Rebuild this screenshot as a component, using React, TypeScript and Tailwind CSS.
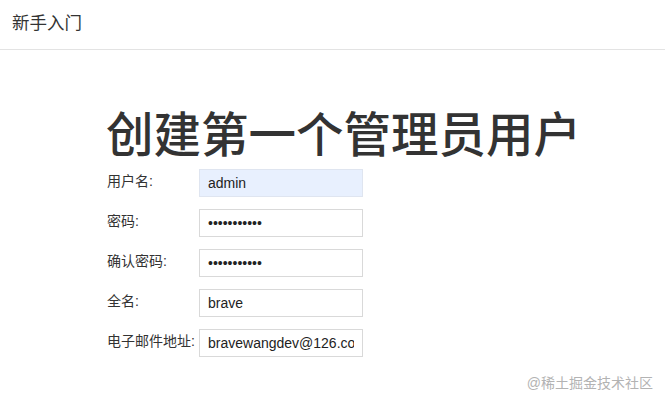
import React from "react";

const cjk = { fontFamily: '"Liberation Sans", "Noto Sans CJK SC", sans-serif' };

const rows: { label: string; value: string; type: string; autofill?: boolean }[] = [
  { label: "用户名:", value: "admin", type: "text", autofill: true },
  { label: "密码:", value: "12345678901", type: "password" },
  { label: "确认密码:", value: "12345678901", type: "password" },
  { label: "全名:", value: "brave", type: "text" },
  { label: "电子邮件地址:", value: "bravewangdev@126.com", type: "text" },
];

export default function App() {
  return (
    <div className="relative w-[665px] h-[404px] bg-white overflow-hidden text-[#333]" style={cjk}>
      <header className="h-[50px] border-b border-[#e3e3e3] flex items-center px-[12px]">
        <span className="text-[17.5px] leading-none -mt-[2px]">新手入门</span>
      </header>
      <main className="pl-[106px]">
        <h1 className="mt-[62px] text-[47.5px] leading-none font-medium text-[#333]">
          创建第一个管理员用户
        </h1>
        <div className="mt-[9px] grid grid-cols-[93px_164px] gap-y-[12px]">
          {rows.map((r) => (
            <React.Fragment key={r.label}>
              <label className="text-[14px] leading-[28px] -mt-[2px] pl-[1px] text-[#333]">{r.label}</label>
              <input
                type={r.type}
                defaultValue={r.value}
                readOnly
                className={
                  "h-[28px] w-[164px] border border-[#d9d9d9] px-[8px] text-[14px] text-[#222] outline-none " +
                  (r.autofill ? "bg-[#e8f0fe] border-[#dfe5f0]" : "bg-white")
                }
                style={{ fontFamily: '"Liberation Sans", Arial, sans-serif' }}
              />
            </React.Fragment>
          ))}
        </div>
      </main>
      <div className="absolute right-[12px] bottom-[14px] text-[14px] leading-none text-[#b3b3b3]">
        @稀土掘金技术社区
      </div>
    </div>
  );
}
